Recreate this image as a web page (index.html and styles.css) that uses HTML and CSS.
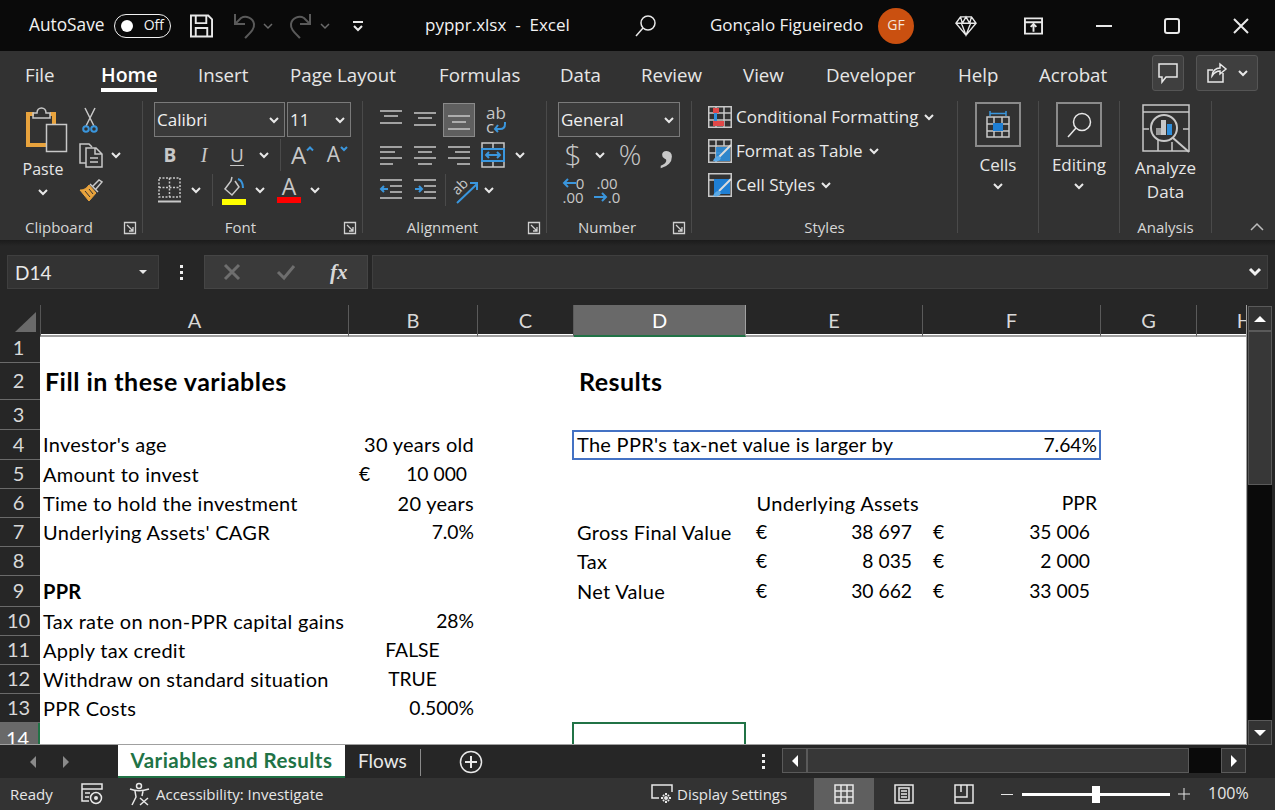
FILE: index.html
```html
<!doctype html>
<html>

<head>
  <meta charset="UTF-8">
  <title>pyppr.xlsx - Excel</title>
  <link rel="stylesheet" href="styles.css">
</head>

<body>
  <div class="app">

    <!-- title bar -->
    <header class="titlebar">
      <span class="tb-autosave">AutoSave</span>
      <span class="toggle"><i class="knob"></i><span>Off</span></span>
      <svg class="tb-save" viewBox="0 0 24 24"><path class="w2" d="M1 1h18l4 4v18H1zM6 1v8h11V1M6 23v-9h12v9"/></svg>
      <svg class="tb-undo" viewBox="0 0 22 26"><path class="dim" d="M2 1v10h10M2 11l6-6c5-3 12 0 13 6 .6 5-3 8-9 14"/></svg>
      <svg class="tb-chev chev-dim ml8" viewBox="0 0 10 6"><path d="M1 1l4 4 4-4"/></svg>
      <svg class="tb-redo" viewBox="0 0 22 26"><path class="dim" d="M20 1v10H10M20 11l-6-6C9 2 2 5 1 11c-.6 5 3 8 9 14"/></svg>
      <svg class="tb-chev chev-dim ml8" viewBox="0 0 10 6"><path d="M1 1l4 4 4-4"/></svg>
      <svg class="tb-custom" viewBox="0 0 10 10"><path class="w2" d="M0 1h10M1 5l4 4 4-4"/></svg>
      <span class="tb-title">pyppr.xlsx&nbsp; -&nbsp; Excel</span>
      <svg class="tb-search" viewBox="0 0 21 22"><circle class="w15" cx="13" cy="8" r="7"/><path class="w15" d="M8 13l-7 8"/></svg>
      <span class="tb-name">Gonçalo Figueiredo</span>
      <span class="avatar">GF</span>
      <svg class="tb-gem" viewBox="0 0 24 24"><path class="w15" d="M6 2h12l5 7-11 13L1 9zM1 9h22M7 9l5 13 5-13M6 2l2 7 4-7 4 7 2-7"/></svg>
      <svg class="tb-box" viewBox="0 0 20 18"><path class="w2" d="M1 1h18v16H1zM1 5h18M10 15V8M7 10l3-3 3 3"/></svg>
      <svg class="tb-min" viewBox="0 0 16 16"><path class="w2" d="M0 8h16"/></svg>
      <svg class="tb-max" viewBox="0 0 16 16"><rect class="w2" x="1" y="1" width="14" height="14" rx="2"/></svg>
      <svg class="tb-close" viewBox="0 0 16 16"><path class="w2" d="M1 1l14 14M15 1L1 15"/></svg>
    </header>

    <!-- ribbon tabs -->
    <nav class="tabs">
      <span class="tab">File</span>
      <span class="tab active">Home</span>
      <span class="tab">Insert</span>
      <span class="tab">Page Layout</span>
      <span class="tab">Formulas</span>
      <span class="tab">Data</span>
      <span class="tab">Review</span>
      <span class="tab">View</span>
      <span class="tab">Developer</span>
      <span class="tab">Help</span>
      <span class="tab">Acrobat</span>
      <span class="tab-btn comment">
        <svg width="22" height="22" viewBox="0 0 22 22"><path class="w15" d="M2 2h18v13H9l-4 5v-5H2z"/></svg>
      </span>
      <span class="tab-btn share">
        <svg width="22" height="22" viewBox="0 0 22 22"><path class="w15" d="M17 11v9H2V8h5M6 14c0-5 4-8 8-8V2l6 5-6 5V9c-4 0-6 2-8 5z"/></svg>
        <svg class="chev" viewBox="0 0 10 6"><path d="M1 1l4 4 4-4"/></svg>
      </span>
    </nav>

    <!-- ribbon -->
    <section class="ribbon">

      <div class="grp g-clip">
        <div class="grp-body clip-body">
          <div class="paste">
            <svg class="paste-ic" width="42" height="46" viewBox="0 0 42 46">
              <path class="orange" d="M9 8H3v31h18M25 8h4v10"/>
              <path class="w15 grey" d="M8 12V7h4c0-3 2-5 4.500-5S21 4 21 7h4v5z"/>
              <rect class="w15 grey" fill="#323232" x="21.500" y="18.500" width="20" height="27"/>
            </svg>
            <span class="paste-txt">Paste</span>
            <svg class="chev" viewBox="0 0 10 6"><path d="M1 1l4 4 4-4"/></svg>
          </div>
          <div class="clip-tools">
            <div class="clip-row r1">
              <svg width="16" height="25" viewBox="0 0 16 25"><path class="w15 grey" d="M3 0l9 18M13 0L4 18"/><circle class="w2b" cx="4" cy="21" r="2.800"/><circle class="w2b" cx="12" cy="21" r="2.800"/></svg>
            </div>
            <div class="clip-row r2">
              <svg width="24" height="25" viewBox="0 0 24 25"><path class="w15 grey" d="M7 20H1V1h9l3 3"/><path class="w15 grey" fill="#323232" d="M7 5h10l6 6v13H7zM16 5v6h7M11 15h8M11 19h8"/></svg>
              <svg class="chev ml-chev" viewBox="0 0 10 6"><path d="M1 1l4 4 4-4"/></svg>
            </div>
            <div class="clip-row r3">
              <svg width="24" height="24" viewBox="0 0 24 24"><path class="w15 grey" d="M14 8l6-6 3 2-6 7M11 6l8 8"/><path fill="#e8a33d" stroke="#e8a33d" d="M10 7l7 8-7 8-9-11c3 0 6-1 9-5z"/><path stroke="#323232" d="M6 13l5 6M10 11l4 5"/></svg>
            </div>
          </div>
        </div>
        <div class="grp-label"><span>Clipboard</span><svg class="launch" viewBox="0 0 12 12"><path d="M.5.5h11v11H.5zM3 3l6 6M9 5v4H5"/></svg></div>
      </div>

      <div class="grp g-font">
        <div class="grp-body pl11">
          <div class="rw rw1">
            <span class="select w131"><span>Calibri</span><svg class="chev" viewBox="0 0 10 6"><path d="M1 1l4 4 4-4"/></svg></span>
            <span class="select w64 ml2"><span>11</span><svg class="chev" viewBox="0 0 10 6"><path d="M1 1l4 4 4-4"/></svg></span>
          </div>
          <div class="rw rw2 shift-1">
            <span class="t w34 glyph bold">B</span>
            <span class="t w34 glyph ital">I</span>
            <span class="t w32 glyph under">U</span>
            <span class="t w22"><svg class="chev" viewBox="0 0 10 6"><path d="M1 1l4 4 4-4"/></svg></span>
            <span class="t w10"><i class="vsep"></i></span>
            <span class="t w35 glyph big">A<svg class="caret" viewBox="0 0 8 5"><path class="blue" d="M1 4.500l3-3 3 3"/></svg></span>
            <span class="t w35 glyph mid">A<svg class="caret" viewBox="0 0 8 5"><path class="blue" d="M1 1l3 3 3-3"/></svg></span>
          </div>
          <div class="rw rw3 shift-1">
            <span class="t w33"><svg width="23" height="26" viewBox="0 0 23 26"><path class="w15 grey dots" d="M1 1h21v19H1zM11.500 1v19M1 10.500h21"/><path class="w2 grey" d="M0 24.500h23"/></svg></span>
            <span class="t w20"><svg class="chev" viewBox="0 0 10 6"><path d="M1 1l4 4 4-4"/></svg></span>
            <span class="t w12"><i class="vsep"></i></span>
            <span class="t w32"><svg width="24" height="29" viewBox="0 0 24 29"><path class="w15 grey" d="M10 1l-1 4-6 8 7 6 7-8-4-6"/><path class="w2b" d="M16 3c3 1 5 4 5 9"/><rect fill="#ffff00" y="23" width="24" height="6"/></svg></span>
            <span class="t w20"><svg class="chev" viewBox="0 0 10 6"><path d="M1 1l4 4 4-4"/></svg></span>
            <span class="t w38 stack"><span class="glyph color-a">A</span><i class="bar-red"></i></span>
            <span class="t w14"><svg class="chev" viewBox="0 0 10 6"><path d="M1 1l4 4 4-4"/></svg></span>
          </div>
        </div>
        <div class="grp-label"><span>Font</span><svg class="launch" viewBox="0 0 12 12"><path d="M.5.5h11v11H.5zM3 3l6 6M9 5v4H5"/></svg></div>
      </div>

      <div class="grp g-align">
        <div class="grp-body pl11">
          <div class="rw rw1">
            <span class="t w34"><svg class="lines" viewBox="0 0 22 26"><path d="M0 4h22M4 9h14M0 16h22"/></svg></span>
            <span class="t w34"><svg class="lines" viewBox="0 0 22 26"><path d="M0 6h22M4 11h14M0 18h22"/></svg></span>
            <span class="t w32 picked ml1"><svg class="lines" viewBox="0 0 22 26"><path d="M0 9h22M4 15h14M0 22h22"/></svg></span>
            <span class="t w34 ml4 wrap-txt">ab<br>c<svg class="wrap-arrow" viewBox="0 0 12 10"><path class="blue" d="M11 0v2c0 3-2 5-5 5H1M4 3L1 7l3 3"/></svg></span>
          </div>
          <div class="rw rw2">
            <span class="t w34"><svg class="lines" viewBox="0 0 22 26"><path d="M0 5h22M0 10h15M0 16h22M0 22h13"/></svg></span>
            <span class="t w34"><svg class="lines" viewBox="0 0 22 26"><path d="M0 5h22M4 10h14M0 16h22M4 22h14"/></svg></span>
            <span class="t w34"><svg class="lines" viewBox="0 0 22 26"><path d="M0 5h22M7 10h15M0 16h22M9 22h13"/></svg></span>
            <span class="t w34"><svg width="24" height="26" viewBox="0 0 24 26"><path class="w15 grey" d="M1 1h22v24H1zM12 1v5M12 20v5"/><path class="w2b" d="M1 7h22v12H1zM5 13h14M8 10l-3 3 3 3M16 10l3 3-3 3"/></svg></span>
            <span class="t w20"><svg class="chev" viewBox="0 0 10 6"><path d="M1 1l4 4 4-4"/></svg></span>
          </div>
          <div class="rw rw3">
            <span class="t w34"><svg class="lines" viewBox="0 0 22 26"><path d="M0 3h22M10 9h12M10 15h12M0 21h22"/><path class="arrow" d="M8 12H1M4 9l-3 3 3 3"/></svg></span>
            <span class="t w34"><svg class="lines" viewBox="0 0 22 26"><path d="M0 3h22M10 9h12M10 15h12M0 21h22"/><path class="arrow" d="M1 12h7M5 9l3 3-3 3"/></svg></span>
            <span class="t w6"><i class="vsep"></i></span>
            <span class="t w36"><svg width="26" height="28" viewBox="0 0 26 28"><text class="ab-rot" x="0" y="15" transform="rotate(-45 8 12)">ab</text><path class="w2b" d="M4 27L24 8M17 7h7v7"/></svg></span>
            <span class="t w10"><svg class="chev" viewBox="0 0 10 6"><path d="M1 1l4 4 4-4"/></svg></span>
          </div>
        </div>
        <div class="grp-label"><span>Alignment</span><svg class="launch" viewBox="0 0 12 12"><path d="M.5.5h11v11H.5zM3 3l6 6M9 5v4H5"/></svg></div>
      </div>

      <div class="grp g-num">
        <div class="grp-body pl11">
          <div class="rw rw1">
            <span class="select w122"><span>General</span><svg class="chev" viewBox="0 0 10 6"><path d="M1 1l4 4 4-4"/></svg></span>
          </div>
          <div class="rw rw2">
            <span class="t w30 glyph dollar">$</span>
            <span class="t w24"><svg class="chev" viewBox="0 0 10 6"><path d="M1 1l4 4 4-4"/></svg></span>
            <span class="t w36 glyph percent">%</span>
            <span class="t w34 glyph comma">,</span>
          </div>
          <div class="rw rw3">
            <span class="t w30 dec"><span class="dec-top"><svg class="dec-arrow" viewBox="0 0 14 10"><path class="blue" d="M14 5H2M6 1L2 5l4 4"/></svg>0</span><span>.00</span></span>
            <span class="t w38 dec"><span>.00</span><span class="dec-top"><svg class="dec-arrow" viewBox="0 0 14 10"><path class="blue" d="M0 5h12M8 1l4 4-4 4"/></svg>.0</span></span>
          </div>
        </div>
        <div class="grp-label"><span>Number</span><svg class="launch" viewBox="0 0 12 12"><path d="M.5.5h11v11H.5zM3 3l6 6M9 5v4H5"/></svg></div>
      </div>

      <div class="grp g-styles">
        <div class="grp-body style-list">
          <div class="style-row">
            <svg width="24" height="22" viewBox="0 0 24 22"><path class="w15 grey" d="M.750.750h22.500v20.500H.750zM8 1v20M16 1v20M1 7h22M1 14h22"/><rect fill="#e04848" x="5" y="2" width="6" height="5"/><rect fill="#e04848" x="5" y="15" width="11" height="5"/><rect fill="#2f8fdc" x="6" y="7" width="3" height="8"/></svg>
            <span>Conditional Formatting</span><svg class="chev" viewBox="0 0 10 6"><path d="M1 1l4 4 4-4"/></svg>
          </div>
          <div class="style-row">
            <svg width="24" height="24" viewBox="0 0 24 24"><path class="w15 grey" d="M.750.750h22.500v22.500H.750zM8 1v22M16 1v6M1 7h22M1 14h12"/><rect fill="#2f8fdc" x="8" y="8" width="14" height="14" opacity=".9"/><path stroke="#dcdcdc" stroke-width="2" d="M23 6L11 18"/><path fill="#5aa9e6" d="M5 22c1-3 3-5 6-5l2 2c-1 3-4 4-8 3z"/></svg>
            <span>Format as Table</span><svg class="chev" viewBox="0 0 10 6"><path d="M1 1l4 4 4-4"/></svg>
          </div>
          <div class="style-row">
            <svg width="24" height="24" viewBox="0 0 24 24"><path class="w15 grey" d="M.750.750h22.500v22.500H.750zM1 7h22"/><rect fill="#1f7fd4" x="6" y="6" width="16" height="15"/><path stroke="#dcdcdc" stroke-width="2" d="M23 6L11 18"/><path fill="#5aa9e6" d="M5 23c1-3 3-5 6-5l2 2c-1 3-4 4-8 3z"/></svg>
            <span>Cell Styles</span><svg class="chev" viewBox="0 0 10 6"><path d="M1 1l4 4 4-4"/></svg>
          </div>
        </div>
        <div class="grp-label"><span>Styles</span></div>
      </div>

      <div class="grp g-cells">
        <div class="grp-body big-btn">
          <span class="big-box"><svg width="26" height="28" viewBox="0 0 26 28"><path class="w15 grey" d="M2 6h22v20H2zM2 13h22M2 20h22M9 6v20M17 6v20"/><rect fill="#1f7fd4" x="8" y="12" width="10" height="8"/><path class="w15b" d="M5 0v5M21 0v5M5 2.500h16"/></svg></span>
          <span class="big-txt">Cells</span>
          <svg class="chev" viewBox="0 0 10 6"><path d="M1 1l4 4 4-4"/></svg>
        </div>
      </div>

      <div class="grp g-edit">
        <div class="grp-body big-btn">
          <span class="big-box"><svg width="26" height="28" viewBox="0 0 26 28"><circle class="w15" cx="16" cy="11" r="8.500"/><path class="w15" d="M10 17L2 26"/></svg></span>
          <span class="big-txt">Editing</span>
          <svg class="chev" viewBox="0 0 10 6"><path d="M1 1l4 4 4-4"/></svg>
        </div>
      </div>

      <div class="grp g-analysis">
        <div class="grp-body analyze">
          <svg width="48" height="48" viewBox="0 0 48 48">
            <path class="w15 grey" d="M1 1h46v46H1zM1 8h46M1 25h6M41 25h6M16 36v11M30 38v9"/>
            <circle class="w2 grey" cx="22" cy="24" r="13"/>
            <rect fill="#9a9a9a" x="14" y="24" width="5" height="7"/>
            <rect fill="#c8c8c8" x="19" y="16" width="5" height="15"/>
            <rect fill="#2f8fdc" x="25" y="20" width="5" height="11"/>
            <path class="w2 grey" d="M31 34l16 14"/>
          </svg>
          <span class="big-txt two">Analyze<br>Data</span>
        </div>
        <div class="grp-label"><span>Analysis</span></div>
      </div>

      <svg class="collapse" viewBox="0 0 14 8"><path d="M1 7l6-6 6 6"/></svg>
    </section>

    <!-- formula bar -->
    <section class="formula">
      <div class="namebox"><span>D14</span><i class="tri-down"></i></div>
      <div class="f-dots"><i></i><i></i><i></i></div>
      <div class="f-btns">
        <svg width="18" height="18" viewBox="0 0 18 18"><path class="f-dim" d="M2 2l14 14M16 2L2 16"/></svg>
        <svg width="20" height="18" viewBox="0 0 20 18"><path class="f-dim" d="M2 9l6 6L18 3"/></svg>
        <span class="fx">fx</span>
      </div>
      <div class="f-input"><svg viewBox="0 0 12 8"><path d="M1 1l5 5 5-5"/></svg></div>
    </section>

    <!-- sheet -->
    <section class="sheet-wrap">
      <div class="sheet">
        <div class="row cols">
          <div class="corner"><svg width="21" height="20" viewBox="0 0 21 20"><path fill="#6a6a6a" d="M21 0v20H0z"/></svg></div>
          <div class="ch">A</div>
          <div class="ch">B</div>
          <div class="ch">C</div>
          <div class="ch on">D</div>
          <div class="ch">E</div>
          <div class="ch">F</div>
          <div class="ch">G</div>
          <div class="ch">H</div>
        </div>

        <div class="row h29"><div class="rh">1</div></div>
        <div class="row h37">
          <div class="rh">2</div>
          <div class="c col-a title">Fill in these variables</div>
          <div class="c col-d title results">Results</div>
        </div>
        <div class="row h30"><div class="rh">3</div></div>
        <div class="row h30">
          <div class="rh">4</div>
          <div class="c col-a">Investor's age</div>
          <div class="c col-b right">30 years old</div>
          <div class="c col-df boxed"><span>The PPR's tax-net value is larger by</span><span class="num">7.64%</span></div>
        </div>
        <div class="row h29">
          <div class="rh">5</div>
          <div class="c col-a">Amount to invest</div>
          <div class="c col-b acc num"><span>€</span><span>10 000</span></div>
        </div>
        <div class="row h29">
          <div class="rh">6</div>
          <div class="c col-a">Time to hold the investment</div>
          <div class="c col-b right">20 years</div>
          <div class="c col-e right ua">Underlying Assets</div>
          <div class="c col-f right num">PPR</div>
        </div>
        <div class="row h29">
          <div class="rh">7</div>
          <div class="c col-a">Underlying Assets' CAGR</div>
          <div class="c col-b right num">7.0%</div>
          <div class="c col-d">Gross Final Value</div>
          <div class="c col-e acc num"><span>€</span><span>38 697</span></div>
          <div class="c col-f acc num"><span>€</span><span>35 006</span></div>
        </div>
        <div class="row h29">
          <div class="rh">8</div>
          <div class="c col-d">Tax</div>
          <div class="c col-e acc num"><span>€</span><span>8 035</span></div>
          <div class="c col-f acc num"><span>€</span><span>2 000</span></div>
        </div>
        <div class="row h31">
          <div class="rh">9</div>
          <div class="c col-a strong">PPR</div>
          <div class="c col-d">Net Value</div>
          <div class="c col-e acc num"><span>€</span><span>30 662</span></div>
          <div class="c col-f acc num"><span>€</span><span>33 005</span></div>
        </div>
        <div class="row h29">
          <div class="rh">10</div>
          <div class="c col-a">Tax rate on non-PPR capital gains</div>
          <div class="c col-b right num">28%</div>
        </div>
        <div class="row h29">
          <div class="rh">11</div>
          <div class="c col-a">Apply tax credit</div>
          <div class="c col-b center num">FALSE</div>
        </div>
        <div class="row h29">
          <div class="rh">12</div>
          <div class="c col-a">Withdraw on standard situation</div>
          <div class="c col-b center num">TRUE</div>
        </div>
        <div class="row h29">
          <div class="rh">13</div>
          <div class="c col-a">PPR Costs</div>
          <div class="c col-b right num">0.500%</div>
        </div>
        <div class="row h21">
          <div class="rh on">14</div>
          <div class="col-d sel"></div>
        </div>
      </div>

      <div class="vscroll">
        <span class="sb-btn"><i class="tri-up"></i></span>
        <span class="sb-thumb"></span>
        <span class="sb-track"></span>
        <span class="sb-btn"><i class="tri-down2"></i></span>
      </div>
    </section>

    <!-- sheet tabs -->
    <section class="sheetbar">
      <div class="sheet-nav"><i class="tri-left dim-tri"></i><i class="tri-right dim-tri"></i></div>
      <div class="sheet-tab">Variables and Results</div>
      <div class="sheet-tab2">Flows</div>
      <svg class="add" width="24" height="24" viewBox="0 0 24 24"><circle class="w15" cx="12" cy="12" r="10.500"/><path class="w2" d="M12 6v12M6 12h12"/></svg>
      <div class="f-dots bar-dots"><i></i><i></i><i></i></div>
      <div class="hscroll">
        <span class="hs-btn"><i class="tri-left"></i></span>
        <span class="hs-thumb"></span>
        <span class="hs-track"></span>
        <span class="hs-btn"><i class="tri-right"></i></span>
      </div>
    </section>

    <!-- status bar -->
    <footer class="status">
      <span class="st-ready">Ready</span>
      <svg class="st-macro" width="22" height="22" viewBox="0 0 22 22"><path class="w15" d="M1 1h20v5H1zM1 6v12h7M4 10h5M4 14h4"/><circle class="w15" cx="15" cy="15" r="5.500"/><circle cx="15" cy="15" r="2" fill="#e6e6e6"/></svg>
      <svg class="st-acc" width="22" height="24" viewBox="0 0 22 24"><circle class="w15" cx="10" cy="4" r="2.500"/><path class="w15" d="M1 7c5 2 13 2 19 0M6 9l1 6-4 8M14 9l-1 5M11 16l8 7M19 16l-8 7"/></svg>
      <span class="st-access">Accessibility: Investigate</span>
      <svg class="st-display" width="22" height="20" viewBox="0 0 22 20"><path class="w15" d="M8 14H1V1h20v7"/><path class="w2" d="M15 9v10M10 14h10M12 11l6 6M18 11l-6 6"/><circle cx="15" cy="14" r="2.500" fill="#e6e6e6" stroke="#333"/></svg>
      <span class="st-dtext">Display Settings</span>
      <span class="st-view on"><svg width="20" height="20" viewBox="0 0 20 20"><path class="w15" d="M1 1h18v18H1zM7 1v18M13 1v18M1 7h18M1 13h18"/></svg></span>
      <span class="st-view"><svg width="20" height="20" viewBox="0 0 20 20"><path class="w15" d="M1 1h18v18H1zM5 4h10v12H5zM7 7h6M7 10h6M7 13h6"/></svg></span>
      <span class="st-view"><svg width="20" height="20" viewBox="0 0 20 20"><path class="w15" d="M1 1h18v18H1zM1 13h12V1M7 1v7"/></svg></span>
      <span class="zoom-minus"></span>
      <span class="slider"><i></i></span>
      <svg class="zoom-plus" width="12" height="12" viewBox="0 0 12 12"><path stroke="#e6e6e6" d="M6 0v12M0 6h12"/></svg>
      <span class="st-zoom">100%</span>
    </footer>

  </div>
</body>

</html>
```

FILE: styles.css
```css
html,
body {
  margin: 0;
  padding: 0;
}

body {
  font: normal 18px/1.2 "Open Sans", sans-serif;
  color: #e6e6e6;
  background: #262626;
}

svg {
  display: block;
  flex: none;
  overflow: visible;
}

.app {
  width: 1275px;
  height: 810px;
  display: flex;
  flex-direction: column;
  overflow: hidden;
}

/* shared svg strokes */
.w2 { fill: none; stroke: #e8e8e8; stroke-width: 2; }
.w15 { fill: none; stroke: #e8e8e8; stroke-width: 1.5; }
.grey { stroke: #c8c8c8; }
.dim { fill: none; stroke: #5a5a5a; stroke-width: 2; }
.w2b { fill: none; stroke: #3a96dd; stroke-width: 2; }
.w15b { fill: none; stroke: #3a96dd; stroke-width: 1.5; }
.blue { fill: none; stroke: #3a96dd; stroke-width: 2; }
.orange { fill: none; stroke: #e8a33d; stroke-width: 4; }
.dots { stroke-dasharray: 2 1.500; }

.chev {
  width: 10px;
  height: 6px;
}

.chev path {
  fill: none;
  stroke: #e8e8e8;
  stroke-width: 2;
}

.chev-dim path,
.chev-dim {
  fill: none;
  stroke: #6a6a6a;
  stroke-width: 1.500;
}

/* title bar */
.titlebar {
  height: 51px;
  flex: none;
  background: #0a0a0a;
  display: flex;
  align-items: center;
  padding-left: 29px;
  font-size: 17px;
  color: #f2f2f2;
  white-space: nowrap;
}

.tb-autosave { width: 76px; font-size: 17.300px; }
.toggle {
  width: 57px;
  height: 24px;
  margin-left: 9px;
  box-sizing: border-box;
  border: 1.500px solid #f2f2f2;
  border-radius: 12px;
  display: flex;
  align-items: center;
  justify-content: space-between;
  padding: 0 6px 0 6px;
  font-size: 14px;
}
.knob {
  width: 12px;
  height: 12px;
  background: #fff;
  border-radius: 50%;
}
.tb-save { width: 23px; height: 24px; margin-left: 19px; }
.tb-undo { width: 22px; height: 26px; margin-left: 20px; }
.tb-redo { width: 22px; height: 26px; margin-left: 17px; }
.tb-chev { width: 10px; height: 6px; }
.ml8 { margin-left: 8px; }
.tb-custom { width: 10px; height: 10px; margin-left: 23px; }
.tb-title { width: 145px; margin-left: 62px; }
.tb-search { width: 21px; height: 22px; margin-left: 65px; }
.tb-name { width: 154px; margin-left: 54px; }
.avatar {
  width: 36px;
  height: 36px;
  margin-left: 14px;
  border-radius: 50%;
  background: #ca5010;
  color: #f4e6dc;
  font-size: 14px;
  display: flex;
  align-items: center;
  justify-content: center;
}
.tb-gem { width: 22px; height: 22px; margin-left: 41px; }
.tb-box { width: 19px; height: 18px; margin-left: 47px; }
.tb-min { width: 16px; height: 16px; margin-left: 53px; }
.tb-max { width: 16px; height: 16px; margin-left: 52px; }
.tb-close { width: 16px; height: 16px; margin-left: 53px; }

/* ribbon tabs */
.tabs {
  height: 46px;
  flex: none;
  background: #323232;
  display: grid;
  grid-template-columns: 76px 97px 92px 149px 121px 81px 102px 83px 132px 81px 113px 32px 74px;
  align-items: start;
  padding-left: 25px;
  box-sizing: border-box;
  font-size: 18.700px;
}

.tab {
  margin-top: 12px;
  line-height: 24px;
  white-space: nowrap;
}

.tab.active {
  justify-self: start;
  font-size: 19.500px;
  font-weight: 600;
  color: #fff;
  border-bottom: 4px solid #fff;
  padding-bottom: 1px;
}

.tab-btn {
  height: 36px;
  margin-top: 4px;
  box-sizing: border-box;
  background: #3f3f3f;
  border: 1px solid #555;
  border-radius: 3px;
  display: flex;
  align-items: center;
  justify-content: center;
}

.share {
  margin-left: 12px;
  gap: 10px;
}

/* ribbon */
.ribbon {
  height: 143px;
  flex: none;
  box-sizing: border-box;
  background: #323232;
  display: flex;
  align-items: flex-start;
  padding-top: 4px;
}

.grp {
  height: 132px;
  flex: none;
  box-sizing: border-box;
  border-right: 1px solid #4a4a4a;
  display: flex;
  flex-direction: column;
  font-size: 16px;
}

.g-clip { width: 143px; }
.g-font { width: 220px; }
.g-align { width: 184px; }
.g-num { width: 145px; }
.g-styles { width: 266px; }
.g-cells { width: 81px; }
.g-edit { width: 81px; }
.g-analysis { width: 92px; }

.grp-body {
  height: 110px;
  flex: none;
  box-sizing: border-box;
}

.grp-label {
  height: 22px;
  display: flex;
  font-size: 15px;
  line-height: 33px;
  color: #d6d6d6;
}

.grp-label span {
  flex: 1;
  text-align: center;
}

.launch {
  width: 12px;
  height: 12px;
  margin: 11px 6px 0 6px;
}

.launch path {
  fill: none;
  stroke: #d0d0d0;
  stroke-width: 1.300;
}

.pl11 { padding: 1px 0 0 11px; }

.rw { display: flex; align-items: center; }
.rw1 { height: 35px; }
.rw2 { height: 36px; }
.rw3 { height: 34px; }
.shift-1 { margin-left: -1px; }
.ml1 { margin-left: 1px; }
.ml2 { margin-left: 2px; }
.ml4 { margin-left: 4px; }

.t {
  height: 34px;
  flex: none;
  display: flex;
  align-items: center;
  justify-content: center;
  position: relative;
}

.w6 { width: 6px; }
.w10 { width: 10px; }
.w12 { width: 12px; }
.w14 { width: 14px; }
.w20 { width: 20px; }
.w22 { width: 22px; }
.w24 { width: 24px; }
.w30 { width: 30px; }
.w32 { width: 32px; }
.w33 { width: 33px; }
.w34 { width: 34px; }
.w35 { width: 35px; }
.w36 { width: 36px; }
.w38 { width: 38px; }
.w64 { width: 64px; }
.w122 { width: 122px; }
.w131 { width: 131px; }

.vsep {
  display: block;
  width: 1px;
  height: 32px;
  background: #4a4a4a;
}

.select {
  height: 35px;
  flex: none;
  box-sizing: border-box;
  background: #3a3a3a;
  border: 1px solid #7a7a7a;
  display: flex;
  align-items: center;
  justify-content: space-between;
  padding: 2px 5px 0 2px;
  font-size: 17px;
  color: #f0f0f0;
}

.select .chev { margin-top: -2px; }

.glyph { color: #c8c8c8; }
.bold { font-weight: 700; font-size: 19px; }
.ital { font-style: italic; font-family: "Liberation Serif", serif; font-size: 20px; }
.under { font-size: 19px; text-decoration: underline; text-underline-offset: 3px; }
.big { font-size: 24px; }
.mid { font-size: 21px; }
.caret {
  width: 8px;
  height: 5px;
  margin-bottom: 14px;
}
.stack { flex-direction: column; }
.color-a { font-size: 23px; line-height: 22px; margin-top: -3px; }
.bar-red { display: block; width: 24px; height: 6px; background: #ff0000; }
.picked { background: #5f5f5f; border: 1px solid #8a8a8a; box-sizing: border-box; }

.lines { width: 22px; height: 26px; }
.lines path { fill: none; stroke: #c8c8c8; stroke-width: 1.500; }
.lines .arrow { stroke: #3a96dd; stroke-width: 2; }

.wrap-txt {
  display: block;
  font-size: 17px;
  line-height: 14px;
  color: #c8c8c8;
  padding: 3px 0 0 7px;
  box-sizing: border-box;
}
.wrap-arrow {
  position: absolute;
  left: 15px;
  top: 19px;
  width: 12px;
  height: 10px;
}
.ab-rot { font-size: 14px; fill: #c8c8c8; font-family: "Open Sans", sans-serif; }
.dollar { font-size: 30px; font-weight: 300; }
.percent { font-size: 28px; font-weight: 300; }
.comma {
  font: 700 56px/34px "Liberation Serif", serif;
  padding: 0 0 30px 4px;
  box-sizing: border-box;
}
.dec {
  flex-direction: column;
  align-items: center;
  font-size: 15px;
  line-height: 14px;
  color: #c8c8c8;
}
.dec-top { display: flex; align-items: center; }
.dec-arrow { width: 14px; height: 10px; }

/* clipboard */
.clip-body { display: flex; padding-top: 2px; }
.paste {
  width: 72px;
  margin-left: 7px;
  display: flex;
  flex-direction: column;
  align-items: center;
  padding-top: 3px;
}
.paste-ic { margin-left: 5px; }
.paste-txt { font-size: 16px; margin-top: 6px; line-height: 22px; }
.paste .chev { margin-top: 9px; }
.clip-tools { display: flex; flex-direction: column; }
.clip-row { display: flex; align-items: center; }
.clip-row.r1 { height: 34px; padding-left: 3px; }
.clip-row.r2 { height: 36px; }
.clip-row.r3 { height: 34px; }
.ml-chev { margin-left: 8px; }

/* styles list */
.style-list { padding: 0 0 0 16px; margin-top: -1px; margin-bottom: 1px; }
.style-row {
  height: 34px;
  display: flex;
  align-items: center;
  gap: 4px;
  font-size: 17px;
  color: #eaeaea;
}
.style-row .chev { margin-left: 2px; }

/* big buttons */
.big-btn {
  display: flex;
  flex-direction: column;
  align-items: center;
  padding-top: 1px;
}
.big-box {
  width: 46px;
  height: 45px;
  box-sizing: border-box;
  border: 2px solid #8a8a8a;
  display: flex;
  align-items: center;
  justify-content: center;
}
.big-txt { font-size: 17px; margin-top: 6px; line-height: 24px; text-align: center; }
.big-txt.two { margin-top: 4px; }
.big-btn .chev { margin-top: 6px; }
.analyze {
  display: flex;
  flex-direction: column;
  align-items: center;
  padding-top: 3px;
}
.collapse {
  width: 14px;
  height: 8px;
  margin: 122px 0 0 38px;
}
.collapse path { fill: none; stroke: #bdbdbd; stroke-width: 1.500; }

/* formula bar */
.formula {
  height: 65px;
  flex: none;
  box-sizing: border-box;
  background: linear-gradient(#1b1b1b, #262626 6px);
  padding: 15px 7px 16px;
  display: flex;
}
.namebox {
  width: 152px;
  box-sizing: border-box;
  background: #333;
  border: 1px solid #3f3f3f;
  display: flex;
  align-items: center;
  justify-content: space-between;
  padding: 0 11px 0 7px;
  font: 19px "Lato", sans-serif;
  color: #e8e8e8;
}
.tri-down {
  width: 0;
  height: 0;
  border-left: 4px solid transparent;
  border-right: 4px solid transparent;
  border-top: 4px solid #e8e8e8;
}
.f-dots {
  width: 45px;
  display: flex;
  flex-direction: column;
  align-items: center;
  justify-content: center;
  gap: 3px;
}
.f-dots i {
  width: 3px;
  height: 3px;
  background: #f0f0f0;
}
.f-btns {
  width: 164px;
  box-sizing: border-box;
  background: #3a3a3a;
  border: 1px solid #454545;
  display: flex;
  align-items: center;
  padding-left: 18px;
  gap: 35px;
}
.f-dim { fill: none; stroke: #6e6e6e; stroke-width: 3; }
.fx {
  font: italic 700 21px "Liberation Serif", serif;
  color: #d8d8d8;
  margin-left: -1px;
}
.f-input {
  flex: 1;
  margin-left: 4px;
  box-sizing: border-box;
  background: #333;
  border: 1px solid #3f3f3f;
  display: flex;
  align-items: center;
  justify-content: flex-end;
  padding-right: 6px;
}
.f-input svg { width: 12px; height: 8px; }
.f-input path { fill: none; stroke: #f0f0f0; stroke-width: 3; }

/* sheet */
.sheet-wrap {
  height: 440px;
  flex: none;
  display: flex;
}
.sheet {
  width: 1247px;
  flex: none;
  overflow: hidden;
  background: #fff;
  border-right: 1px solid #a0a0a0;
  border-bottom: 1px solid #a0a0a0;
  box-sizing: border-box;
  font: 20px "Lato", sans-serif;
  letter-spacing: .28px;
  color: #000;
}
.row {
  display: grid;
  grid-template-columns: 40px 308px 129px 96px 172px 177px 178px 96px 96px;
}
.h21 { height: 21px; }
.h29 { height: 29px; }
.h30 { height: 30px; }
.h31 { height: 31px; }
.h37 { height: 37px; }

.cols {
  height: 29px;
  grid-template-columns: 41px 308px 129px 96px 172px 177px 178px 96px 96px;
  background: #262626;
  letter-spacing: 0;
}
.corner {
  display: flex;
  justify-content: flex-end;
  align-items: flex-end;
  padding: 0 4px 3px 0;
  border-right: 1px solid #555;
  border-bottom: 2px solid #a0a0a0;
  box-sizing: border-box;
}
.ch {
  box-sizing: border-box;
  border-right: 1px solid #5a5a5a;
  border-bottom: 2px solid #a0a0a0;
  color: #d8d8d8;
  text-align: center;
  line-height: 30px;
}
.ch.on {
  background: #696969;
  color: #fff;
  border-right-color: #a0a0a0;
  border-bottom-color: #217346;
}
.rh {
  grid-column: 1;
  background: #262626;
  color: #d8d8d8;
  border-bottom: 1px solid #6a6a6a;
  display: flex;
  align-items: center;
  justify-content: center;
  padding: 0 3px 2px 0;
  box-sizing: border-box;
  letter-spacing: 0;
}
.rh.on {
  background: #696969;
  color: #fff;
  border-bottom: 0;
  border-right: 2px solid #217346;
  align-items: flex-start;
  padding-top: 3px;
}

.c {
  grid-row: 1;
  min-width: 0;
  padding: 0 3px 2px;
  display: flex;
  align-items: center;
  white-space: nowrap;
  box-sizing: border-box;
}
.col-a { grid-column: 2; }
.col-b { grid-column: 3; }
.col-d { grid-column: 5; padding-left: 4px; }
.col-e { grid-column: 6; }
.col-f { grid-column: 7; }
.col-df { grid-column: 5 / 8; }

.num { font-size: 19.300px; letter-spacing: 0; }
.title { font-size: 25px; font-weight: 700; padding-left: 5px; letter-spacing: .48px; }
.results { padding-left: 6px; }
.strong { font-weight: 700; }
.right { justify-content: flex-end; }
.center { justify-content: center; }
.acc { justify-content: space-between; padding: 0 10px 2px 11px; }
.boxed {
  border: 2px solid #4472c4;
  justify-content: space-between;
  margin: 0 -1px;
  padding: 0 2px 2px 3px;
}
.ua { padding-right: 3px; }
.sel {
  grid-row: 1;
  height: 23px;
  margin: -1px -1px 0;
  box-sizing: border-box;
  border: 2px solid #217346;
  border-bottom: 0;
}

/* scrollbars */
.vscroll {
  flex: 1;
  background: #262626;
  display: flex;
  flex-direction: column;
  padding: 1px 3px 0 1px;
  box-sizing: border-box;
}
.sb-btn {
  height: 25px;
  flex: none;
  box-sizing: border-box;
  background: #333;
  border: 1px solid #5a5a5a;
  display: flex;
  align-items: center;
  justify-content: center;
}
.sb-thumb {
  height: 154px;
  flex: none;
  box-sizing: border-box;
  background: #373737;
  border: 1px solid #5a5a5a;
}
.sb-track { flex: 1; background: #0a0a0a; }
.tri-up {
  border-left: 6px solid transparent;
  border-right: 6px solid transparent;
  border-bottom: 6px solid #fff;
}
.tri-down2 {
  border-left: 6px solid transparent;
  border-right: 6px solid transparent;
  border-top: 6px solid #fff;
}
.tri-left {
  border-top: 6px solid transparent;
  border-bottom: 6px solid transparent;
  border-right: 6px solid #fff;
}
.tri-right {
  border-top: 6px solid transparent;
  border-bottom: 6px solid transparent;
  border-left: 6px solid #fff;
}
.tri-left.dim-tri { border-right-color: #8a8a8a; }
.tri-right.dim-tri { border-left-color: #8a8a8a; }

/* sheet tabs */
.sheetbar {
  height: 33px;
  flex: none;
  background: #262626;
  display: flex;
  align-items: flex-start;
  font: 19px "Lato", sans-serif;
}
.sheet-nav {
  width: 118px;
  height: 33px;
  box-sizing: border-box;
  display: flex;
  align-items: center;
  gap: 27px;
  padding-left: 30px;
}
.sheet-tab {
  width: 227px;
  height: 33px;
  box-sizing: border-box;
  background: #fff;
  border-bottom: 2px solid #217346;
  color: #217346;
  font-size: 20.500px;
  font-weight: 700;
  letter-spacing: .45px;
  text-align: center;
  line-height: 30px;
}
.sheet-tab2 {
  width: 76px;
  height: 27px;
  margin-top: 4px;
  box-sizing: border-box;
  border-right: 1px solid #8a8a8a;
  padding-left: 13px;
  color: #e8e8e8;
  line-height: 23px;
}
.add { margin: 5px 0 0 38px; }
.bar-dots {
  width: 10px;
  height: 33px;
  margin-left: 275px;
}
.hscroll {
  width: 464px;
  height: 25px;
  margin: 3px 0 0 14px;
  display: flex;
}
.hs-btn {
  width: 25px;
  flex: none;
  box-sizing: border-box;
  background: #333;
  border: 1px solid #5a5a5a;
  display: flex;
  align-items: center;
  justify-content: center;
}
.hs-thumb {
  width: 382px;
  flex: none;
  box-sizing: border-box;
  background: #373737;
  border: 1px solid #5a5a5a;
}
.hs-track { flex: 1; background: #0a0a0a; }

/* status bar */
.status {
  height: 32px;
  flex: 1;
  background: #333;
  display: flex;
  align-items: center;
  font-size: 15px;
  color: #e6e6e6;
  white-space: nowrap;
}
.st-ready { width: 43px; margin-left: 10px; }
.st-macro { margin-left: 28px; }
.st-acc { margin-left: 26px; }
.st-access { width: 166px; margin-left: 5px; }
.st-display { margin-left: 329px; }
.st-dtext { width: 111px; margin-left: 4px; }
.st-view {
  width: 60px;
  height: 32px;
  display: flex;
  align-items: center;
  justify-content: center;
}
.st-view.on { background: #5f5f5f; margin-left: 26px; }
.zoom-minus {
  width: 12px;
  height: 1px;
  background: #e6e6e6;
  margin-left: 7px;
}
.slider {
  width: 148px;
  height: 3px;
  margin-left: 9px;
  background: #fff;
  display: flex;
  align-items: center;
  padding-left: 70px;
  box-sizing: border-box;
}
.slider i {
  width: 8px;
  height: 17px;
  flex: none;
  background: #fff;
}
.zoom-plus { margin-left: 8px; }
.st-zoom { margin-left: 18px; font-size: 16px; }
```
